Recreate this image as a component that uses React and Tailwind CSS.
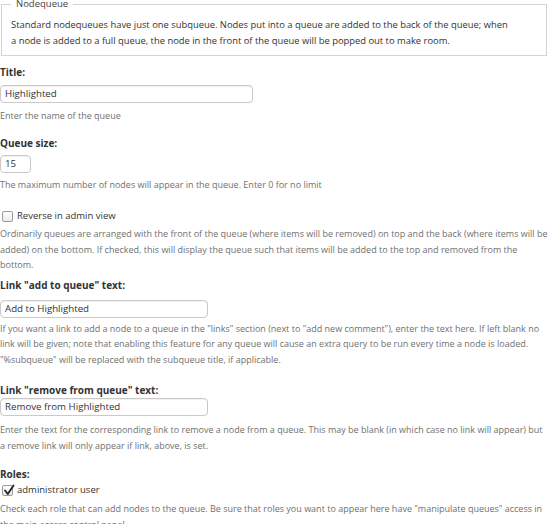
import React from "react";

const font = { fontFamily: "'Open Sans', 'DejaVu Sans', sans-serif" };

function Label({ children, className = "" }) {
  return (
    <div className={`text-[10px] leading-[16px] font-bold text-[#333] ${className}`}>{children}</div>
  );
}

function Desc({ children, className = "" }) {
  return (
    <div className={`text-[9px] leading-[15.5px] text-[#707070] ${className}`}>{children}</div>
  );
}

function TextInput({ value, width }) {
  return (
    <div
      className={`${width} h-[18px] border border-[#c9c9c9] rounded-[4px] bg-white pl-[4px] text-[9.7px] leading-[16px] text-[#333] shadow-[inset_0_1px_1px_rgba(0,0,0,0.06)]`}
    >
      {value}
    </div>
  );
}

function Check({ checked, label }) {
  return (
    <div className="flex items-center gap-[4px] text-[9.5px] leading-[16px] text-[#333]">
      <span className="relative ml-[2px] w-[11px] h-[11px] border border-[#9a9a9a] rounded-[2px] bg-gradient-to-b from-white to-[#ececec]">
        {checked && (
          <svg viewBox="0 0 12 12" className="absolute -top-[2px] left-[0px] w-[12px] h-[12px]">
            <path d="M2 6.5 L4.8 10 L10.5 1.5" fill="none" stroke="#222" strokeWidth="1.8" strokeLinecap="round" strokeLinejoin="round" />
          </svg>
        )}
      </span>
      <span>{label}</span>
    </div>
  );
}

export default function App() {
  return (
    <div className="w-[550px] h-[524px] overflow-hidden bg-white" style={font}>
      <div className="-mt-[2px]">
        <fieldset className="mx-[1px] border border-[#d4d4d4] pl-[9px] pr-[9px] pt-[7px] pb-[6px] w-[546px]">
          <legend className="px-[5px] text-[9.5px] leading-[12px] text-[#444]">Nodequeue</legend>
          <div className="text-[9.4px] leading-[16px] text-[#333]">
            Standard nodequeues have just one subqueue. Nodes put into a queue are added to the back of the queue; when
            <br />
            a node is added to a full queue, the node in the front of the queue will be popped out to make room.
          </div>
        </fieldset>

        <Label className="mt-[8px]">Title:</Label>
        <div className="mt-[5px]">
          <TextInput value="Highlighted" width="w-[253px]" />
        </div>
        <Desc className="mt-[5px]">Enter the name of the queue</Desc>

        <Label className="mt-[11px]">Queue size:</Label>
        <div className="mt-[4px]">
          <TextInput value="15" width="w-[31px]" />
        </div>
        <Desc className="mt-[4px]">The maximum number of nodes will appear in the queue. Enter 0 for no limit</Desc>

        <div className="mt-[16px]">
          <Check label="Reverse in admin view" />
        </div>
        <Desc className="mt-[2px]">
          Ordinarily queues are arranged with the front of the queue (where items will be removed) on top and the back (where items will be added) on the bottom. If checked, this will display the queue such that items will be added to the top and removed from the bottom.
        </Desc>

        <Label className="mt-[4px]">Link "add to queue" text:</Label>
        <div className="mt-[7px]">
          <TextInput value="Add to Highlighted" width="w-[208px]" />
        </div>
        <Desc className="mt-[3px]">
          If you want a link to add a node to a queue in the "links" section (next to "add new comment"), enter the text here. If left blank no link will be given; note that enabling this feature for any queue will cause an extra query to be run every time a node is loaded. "%subqueue" will be replaced with the subqueue title, if applicable.
        </Desc>

        <Label className="mt-[15px]">Link "remove from queue" text:</Label>
        <div className="mt-[0px]">
          <TextInput value="Remove from Highlighted" width="w-[208px]" />
        </div>
        <Desc className="mt-[6px]">
          Enter the text for the corresponding link to remove a node from a queue. This may be blank (in which case no link will appear) but
          <br />
          a remove link will only appear if link, above, is set.
        </Desc>

        <Label className="mt-[13px]">Roles:</Label>
        <div className="mt-[0px]">
          <Check checked label="administrator user" />
        </div>
        <Desc className="mt-[3px]">
          Check each role that can add nodes to the queue. Be sure that roles you want to appear here have "manipulate queues" access in the main access control panel.
        </Desc>
      </div>
    </div>
  );
}
